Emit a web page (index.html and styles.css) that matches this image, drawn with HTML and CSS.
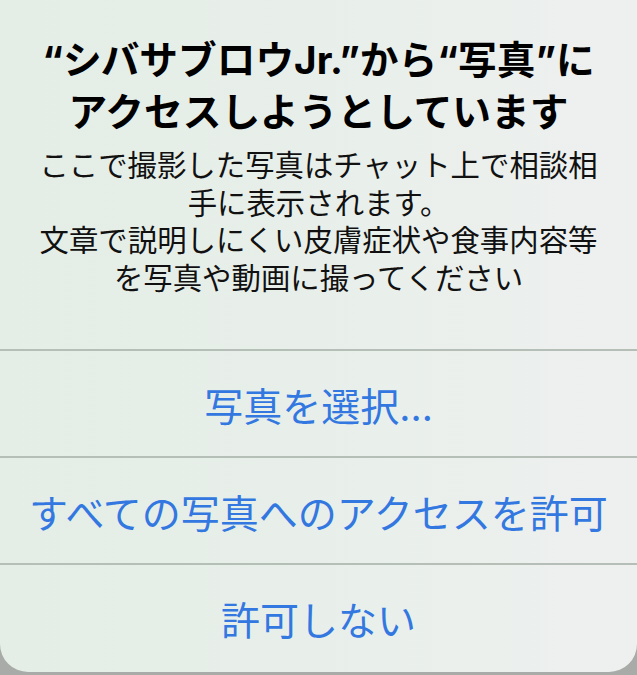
FILE: index.html
```html
<!DOCTYPE html>
<html lang="ja">
<head>
<meta charset="utf-8">
<link rel="stylesheet" href="styles.css">
</head>
<body>
<div class="alert">
  <div class="header">
    <h1 class="title">“シバサブロウJr.”から“写真”に<br>アクセスしようとしています</h1>
    <p class="message">ここで撮影した写真はチャット上で相談相<br>手に表示されます。<br>文章で説明しにくい皮膚症状や食事内容等<br>を写真や動画に撮ってください</p>
  </div>
  <div class="actions">
    <div class="action">写真を選択…</div>
    <div class="action">すべての写真へのアクセスを許可</div>
    <div class="action">許可しない</div>
  </div>
</div>
</body>
</html>
```
FILE: styles.css
```css
html, body {
  margin: 0;
  padding: 0;
  background: #a8aba8;
}
body {
  width: 637px;
  height: 675px;
  overflow: hidden;
  font-family: "Inter", "Noto Sans CJK JP", sans-serif;
}
.alert {
  width: 637px;
  height: 672px;
  background: linear-gradient(90deg, #e4ede6 0%, #e8efea 50%, #eef0ef 100%);
  border-radius: 0 0 28px 28px;
  display: flex;
  flex-direction: column;
}
.header {
  height: 349px;
  box-sizing: border-box;
  padding-top: 34px;
  text-align: center;
}
.title {
  margin: 0;
  font-size: 38.7px;
  line-height: 52px;
  font-weight: 700;
  color: #000;
  white-space: nowrap;
}
.message {
  margin: 9px 0 0;
  font-size: 29.4px;
  line-height: 37.5px;
  font-weight: 400;
  color: #111;
  white-space: nowrap;
}
.actions {
  display: flex;
  flex-direction: column;
}
.action {
  height: 105px;
  border-top: 2px solid #b6bfb7;
  display: flex;
  align-items: center;
  justify-content: center;
  font-size: 39px;
  color: #3378e0;
  white-space: nowrap;
}
```
